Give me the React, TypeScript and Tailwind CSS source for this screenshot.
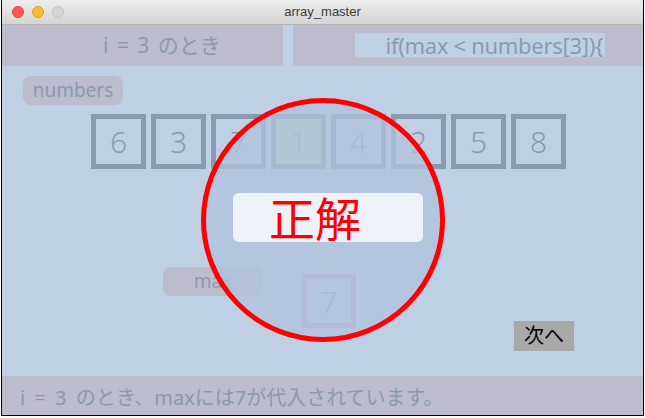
import React from 'react';

const numbers = [6, 3, 7, 1, 4, 2, 5, 8];

const jp = { fontFamily: '"Noto Sans", "Noto Sans CJK JP", sans-serif' };

export default function App() {
    return (
        <div className="h-[418px] w-[645px] bg-white">
            <div className="ml-px flex h-[416px] w-[643px] flex-col border-x border-b border-black">
                <TitleBar />
                <div className="flex flex-1 flex-col bg-[#c0d0e4]" style={jp}>
                    <div className="flex h-[41px] gap-[10px]">
                        <div className="flex w-[281px] items-center bg-[#bdbccc] pl-[101px] text-[21px] text-[#8a9bb0] [word-spacing:3px]">
                            i = 3 のとき
                        </div>
                        <div className="flex flex-1 items-start justify-end bg-[#bdbccc] pt-[8px] pr-[38px]">
                            <div className="flex h-[24px] w-[250px] items-center justify-end bg-[#c0d0e4] pr-[2px] text-[22px] tracking-[-0.3px] text-[#8a9bb0]">
                                if(max &lt; numbers[3]){'{'}
                            </div>
                        </div>
                    </div>

                    <div className="relative flex-1">
                        <div className="ml-[21px] mt-[10px] flex h-[29px] w-[100px] items-center justify-center rounded-lg bg-[#bdbccc] text-[19px] text-[#8a9bb0]">
                            numbers
                        </div>
                        <div className="ml-[89px] mt-[9px] flex gap-[5px]">
                            {numbers.map((n, i) => (
                                <NumBox key={i} value={n} highlight={i === 3} />
                            ))}
                        </div>
                        <div className="mt-[98px] flex items-start">
                            <div className="ml-[161px] flex h-[29px] w-[100px] items-center justify-center rounded-lg bg-[#bdbccc] text-[19px] text-[#8a9bb0]">
                                max
                            </div>
                            <div className="ml-[39px] mt-[7px] flex h-[54px] w-[54px] items-center justify-center border-[5px] border-[#b8a0c8] text-[30px] font-light text-[#8a9bb0]">
                                7
                            </div>
                            <button className="ml-auto mr-[69px] mt-[54px] flex h-[30px] w-[60px] items-center justify-center bg-[#a8a8a8] text-[20px] text-black">
                                次へ
                            </button>
                        </div>

                        {/* answer overlay */}
                        <div className="absolute left-[199px] top-[32px] flex h-[244px] w-[244px] items-center justify-center rounded-full border-[5px] border-[#ff0000] bg-[rgba(176,195,222,0.75)]">
                            <div className="mb-[5px] ml-[10px] flex h-[49px] w-[190px] items-center rounded-md bg-[#eef1f7] pl-[36px] text-[46px] leading-none text-[#ff0000]">
                                正解
                            </div>
                        </div>
                    </div>

                    <div className="flex h-[39px] items-center bg-[#bdbccc] pl-[18px] pt-[4px] text-[20px] text-[#8a9bb0] [word-spacing:4px]">
                        i = 3 のとき、maxには7が代入されています。
                    </div>
                </div>
            </div>
        </div>
    );
}

function TitleBar() {
    return (
        <div className="relative flex h-[25px] items-center border-b border-[#b4b4b4] bg-gradient-to-b from-[#ededed] to-[#d5d5d5]">
            <div className="ml-[10px] flex gap-[8px]">
                <span className="h-[12px] w-[12px] rounded-full border border-[#e2463f] bg-[#fc5753]" />
                <span className="h-[12px] w-[12px] rounded-full border border-[#e1a116] bg-[#fdbc2e]" />
                <span className="h-[12px] w-[12px] rounded-full border border-[#c4c4c4] bg-[#d6d6d6]" />
            </div>
            <div
                className="absolute inset-x-0 text-center text-[13px] text-[#3c3c3c]"
                style={{ fontFamily: '"Liberation Sans", Arial, sans-serif' }}
            >
                array_master
            </div>
        </div>
    );
}

function NumBox({ value, highlight }: { value: number; highlight: boolean }) {
    return (
        <div
            className={
                highlight
                    ? 'flex h-[55px] w-[55px] items-center justify-center border-[5px] border-[#8a9bb0] bg-[#c0d0b8] text-[30px] font-light text-[#8a9bb0]'
                    : 'flex h-[55px] w-[55px] items-center justify-center border-[5px] border-[#8a9bb0] text-[30px] font-light text-[#8a9bb0]'
            }
        >
            {value}
        </div>
    );
}
